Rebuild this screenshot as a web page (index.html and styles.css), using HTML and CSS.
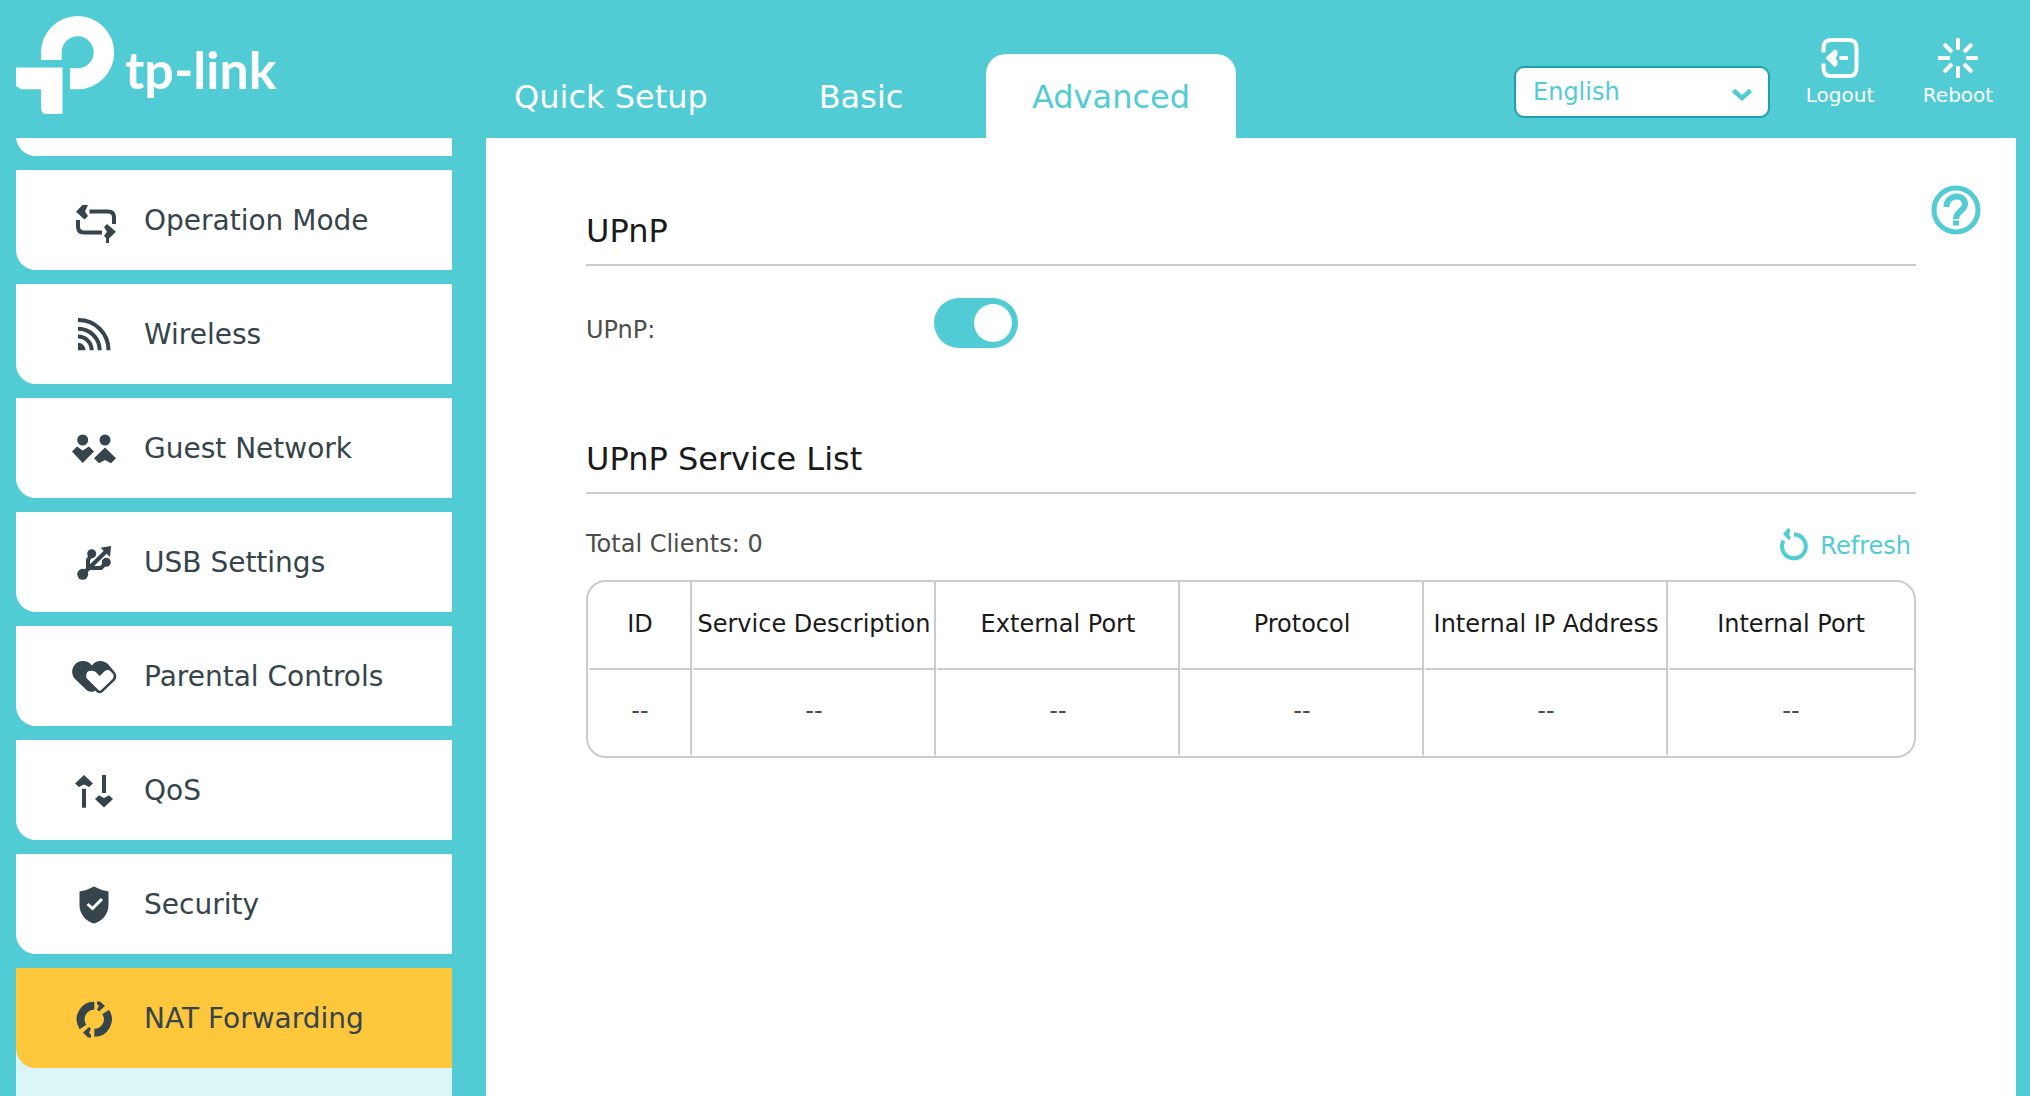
FILE: index.html
```html
<!DOCTYPE html>
<html lang="en">
<head>
<meta charset="utf-8">
<meta name="viewport" content="width=device-width, initial-scale=1">
<title>UPnP - NAT Forwarding</title>
<link rel="stylesheet" href="styles.css">
</head>
<body>
<div class="app">
  <header class="header">
    <a class="logo" href="#" aria-label="tp-link">
      <svg width="290" height="98" viewBox="0 0 290 98" fill="#fff">
        <path d="M25 44V36.600A36.600 36.600 0 1 1 61.700 73.200H54V52.300H61.700A16 16 0 1 0 45.700 36.500V44Z"/>
        <path d="M0 51.500H46.500V98H28L25 94V73.200H5L0 70Z"/>
        <text class="logo-text" x="109" y="73">tp-link</text>
      </svg>
    </a>
    <nav class="tabs" aria-label="Main">
      <a class="tab" href="#">Quick Setup</a>
      <a class="tab" href="#">Basic</a>
      <a class="tab tab-active" href="#" aria-current="page">Advanced</a>
    </nav>
    <div class="tools">
      <div class="language">
        <select class="language-select" aria-label="Language">
          <option>English</option>
        </select>
        <svg class="language-arrow" width="20" height="14" viewBox="0 0 20 14" fill="none" stroke="#51ccd4" stroke-width="4.500"><path d="M1.500 2.500 10 10 18.500 2.500"/></svg>
      </div>
      <button class="tool" type="button">
        <svg width="40" height="42" viewBox="0 0 40 42" fill="none" stroke="#fff" stroke-width="4"><path d="M3.500 14.500V10Q3.500 2 11 2H29Q36.500 2 36.500 10V30Q36.500 38 29 38H11Q3.500 38 3.500 30V25.500"/><path d="M19.500 20H28"/><path d="M5.500 20 14.500 11.500 17.500 13V17L15.500 20 17.500 23V27L14.500 29Z" fill="#fff" stroke="none"/></svg>
        <span>Logout</span>
      </button>
      <button class="tool" type="button">
        <svg width="40" height="42" viewBox="0 0 40 42" fill="none" stroke="#fff" stroke-width="4"><path d="M20 0V12M20 28V40M0 20H12M28 20H40M6 6 14 14M26 26 34 34M34 6 26 14M14 26 6 34"/></svg>
        <span>Reboot</span>
      </button>
    </div>
  </header>

  <div class="body">
    <nav class="sidebar" aria-label="Advanced">
      <ul class="menu">
        <li class="menu-item"></li>
        <li class="menu-item"><a class="menu-link" href="#">
          <svg class="icon" viewBox="0 0 48 48"><path class="line" d="M19.500 14.500H38Q44 14.500 44 20.500V27M8 23V29.500Q8 35.500 14 35.500H32"/><path d="M6 14.700 12.500 8H18L15 14.500 18 19 14.500 22.500ZM46 34.700 37 27 34 30 37 34.700 34 39 36 41V46H39V41.500Z"/></svg>
          Operation Mode</a></li>
        <li class="menu-item"><a class="menu-link" href="#">
          <svg class="icon" viewBox="0 0 48 48"><path class="line" d="M8 9A30 30 0 0 1 38.500 39.300M8 17.800A21.500 21.500 0 0 1 29.700 39.300M8 25.500A13.700 13.700 0 0 1 21.700 39.300"/><path d="M8 31.700A7.600 7.600 0 0 1 15.600 39.300H8Z"/></svg>
          Wireless</a></li>
        <li class="menu-item"><a class="menu-link" href="#">
          <svg class="icon" viewBox="0 0 48 48"><circle cx="12.700" cy="15" r="5.500"/><circle cx="35" cy="15" r="5.500"/><path d="M2 26.500 7 21.500 12.700 25.500 19 21.500 24 26.500 12.700 38ZM35 22.500 46 33.300 41 38.300 35 35 29 38.300 24 33.300Z"/></svg>
          Guest Network</a></li>
        <li class="menu-item"><a class="menu-link" href="#">
          <svg class="icon" viewBox="0 0 48 48"><circle cx="12.700" cy="35.300" r="5.500"/><circle cx="21.700" cy="14.700" r="4.500"/><circle cx="36.300" cy="23.300" r="4.500"/><path class="line" d="M12.700 35.300 36.500 12M18 30V21L21.500 15.500M18.500 29H31L36 24"/><path d="M41 7 30.500 8.700 40 18Z"/></svg>
          USB Settings</a></li>
        <li class="menu-item"><a class="menu-link" href="#">
          <svg class="icon" viewBox="0 0 48 48"><path d="M22 12.500C18 7 9 6.500 5 11.500C1 16 1.500 22 5 26L17 37.500Q20 39.500 24 38.500L40 22L44 18.500L38 11C33 6.500 25 7 22 12.500Z"/><path d="M29.700 21.300 26.500 18Q21 15 16.500 18Q14 21.500 15.500 26L27.500 38Q29.500 40 32 38L44 26.500Q46 23.500 44 20L40.500 16.500Q37 14.500 33.500 17.500Z" fill="#fff" stroke="#36444b" stroke-width="2.500"/></svg>
          Parental Controls</a></li>
        <li class="menu-item"><a class="menu-link" href="#">
          <svg class="icon" viewBox="0 0 48 48"><path class="line" d="M14 21.700V40.700M34 8V26"/><path d="M14 8 23 16.500 19 20 14 17.500 9 20 5 16.500ZM34 40.500 25 32 29 28.300 34 31 39 28.300 43 32Z"/></svg>
          QoS</a></li>
        <li class="menu-item"><a class="menu-link" href="#">
          <svg class="icon" viewBox="0 0 48 48"><path d="M24 5.500Q31 9.500 38.500 10.500V24C38.500 33 32 40.500 24 42.500C16 40.500 9.500 33 9.500 24V10.500Q17 9.500 24 5.500Z"/><path d="M17.500 23 22.500 27.500 32 18" fill="none" stroke="#fff" stroke-width="3"/></svg>
          Security</a></li>
        <li class="menu-item menu-item-open"><a class="menu-link" href="#" aria-current="page">
          <svg class="icon" viewBox="0 0 48 48"><path d="M24.300 10.800A13.500 13.500 0 0 0 13 31.900M35.700 17A13.500 13.500 0 0 1 24.300 37.800" fill="none" stroke="#36444b" stroke-width="8"/><path d="M27 6.500H30L35 11 29 16.500 27 14.500 29 11 27 9ZM21 42.500H18L13 37.500 19 32 21 34 19 37.500 21 40Z"/></svg>
          NAT Forwarding</a></li>
      </ul>
    </nav>

    <main class="content">
      <button class="help" type="button" aria-label="Help">
        <svg width="50" height="50" viewBox="0 0 50 50" fill="none" stroke="#51ccd4" stroke-width="5"><circle cx="25" cy="25" r="22"/><path d="M15.500 22C15.500 8.500 34 8.500 34 19C34 26 25 26 25 34M25 35.500V40.500" stroke-width="6"/></svg>
      </button>

      <section class="section">
        <h2 class="title">UPnP</h2>
        <div class="field">
          <label class="field-label" for="upnp">UPnP:</label>
          <input class="switch" type="checkbox" role="switch" id="upnp" checked>
        </div>
      </section>

      <section class="section">
        <h2 class="title">UPnP Service List</h2>
        <div class="toolbar">
          <p class="total">Total Clients: 0</p>
          <button class="refresh" type="button">
            <svg width="28" height="36" viewBox="0 0 28 36"><path d="M14 6.500A11.900 11.900 0 1 1 3.600 12.500" fill="none" stroke="#51ccd4" stroke-width="4"/><path d="M3 6 8 0 10 1V4L9 6.500 11 10 9 12Z" fill="#51ccd4"/></svg>
            Refresh
          </button>
        </div>
        <table class="table">
          <colgroup><col class="col-id"><col class="col-data" span="4"><col></colgroup>
          <thead>
            <tr><th scope="col">ID</th><th scope="col">Service Description</th><th scope="col">External Port</th><th scope="col">Protocol</th><th scope="col">Internal IP Address</th><th scope="col">Internal Port</th></tr>
          </thead>
          <tbody>
            <tr><td>--</td><td>--</td><td>--</td><td>--</td><td>--</td><td>--</td></tr>
          </tbody>
        </table>
      </section>
    </main>
  </div>
</div>
</body>
</html>
```
FILE: styles.css
```css
:root {
  --teal: #51ccd4;
  --ink: #36444b;
  --line: #ccc;
}

* { box-sizing: border-box; }

body {
  margin: 0;
  background: var(--teal);
  color: #4d4d4d;
  font: 24px/36px Verdana, "DejaVu Sans", sans-serif;
}

button {
  border: 0;
  padding: 0;
  background: none;
  font: inherit;
  cursor: pointer;
}

a { text-decoration: none; }

.app {
  display: flex;
  flex-direction: column;
  height: 100vh;
}

/* Header */
.header {
  display: flex;
  flex: none;
  padding-right: 32px;
}

.logo {
  flex: none;
  width: 486px;
  padding: 16px 16px 24px;
}

.logo svg { display: block; }

.logo-text {
  font: 700 52px Lato, sans-serif;
}

.tabs {
  display: flex;
  align-items: flex-end;
}

.tab {
  width: 250px;
  padding: 23px 0 21px;
  border-radius: 20px 20px 0 0;
  color: #fff;
  font-size: 32px;
  line-height: 40px;
  text-align: center;
  white-space: nowrap;
}

.tab-active {
  background: #fff;
  color: var(--teal);
}

.tools {
  display: flex;
  align-items: flex-start;
  gap: 38px;
  margin-left: auto;
  padding-top: 38px;
}

.language {
  position: relative;
  margin: 28px -8px 0 0;
}

.language-select {
  display: block;
  width: 256px;
  height: 52px;
  padding: 0 48px 0 17px;
  border: 2px solid #1ba1a9;
  border-radius: 10px;
  appearance: none;
  background: #fff;
  color: var(--teal);
  font: inherit;
}

.language-arrow {
  position: absolute;
  top: 22px;
  right: 18px;
  pointer-events: none;
}

.tool {
  display: flex;
  flex-direction: column;
  align-items: center;
  gap: 3px;
  width: 80px;
  color: #fff;
  font-size: 20px;
  line-height: 24px;
}

/* Side menu */
.body {
  display: flex;
  flex: 1;
  gap: 34px;
  min-height: 0;
  padding: 0 14px 0 16px;
}

.sidebar {
  flex: none;
  width: 436px;
  overflow: hidden;
}

.menu {
  display: flex;
  flex-direction: column;
  gap: 14px;
  min-height: 100%;
  margin: -82px 0 0;
  padding: 0;
  list-style: none;
}

.menu-item {
  flex: none;
  min-height: 100px;
  border-bottom-left-radius: 20px;
  background: #fff;
}

.menu-link {
  display: flex;
  align-items: center;
  gap: 26px;
  height: 100px;
  padding: 2px 0 0 54px;
  border-bottom-left-radius: 20px;
  color: var(--ink);
  font-size: 28px;
}

.menu-item-open {
  min-height: 200px;
  border-radius: 0;
  background: #dcf5f6;
}

.menu-item-open .menu-link { background: #ffc73c; }

.icon {
  width: 48px;
  height: 48px;
  fill: var(--ink);
}

.icon .line {
  fill: none;
  stroke: var(--ink);
  stroke-width: 4px;
}

/* Content */
.content {
  position: relative;
  display: flex;
  flex: 1;
  flex-direction: column;
  gap: 91px;
  min-width: 0;
  padding: 73px 100px 0;
  overflow: auto;
  background: #fff;
}

.help {
  position: absolute;
  top: 47px;
  right: 35px;
  height: 50px;
  line-height: 0;
}

.title {
  margin: 0 0 32px;
  padding-bottom: 13px;
  border-bottom: 2px solid var(--line);
  color: #1a1a1a;
  font-size: 32px;
  font-weight: 400;
  line-height: 40px;
}

.field {
  display: flex;
  align-items: flex-end;
}

.field-label { width: 348px; }

.switch {
  width: 84px;
  height: 50px;
  margin: 0;
  padding: 6px;
  border-radius: 25px;
  appearance: none;
  background: var(--line);
}

.switch::before {
  display: block;
  width: 38px;
  height: 38px;
  border-radius: 50%;
  background: #fff;
  content: "";
}

.switch:checked { background: var(--teal); }
.switch:checked::before { margin-left: auto; }

.toolbar {
  display: flex;
  justify-content: space-between;
  margin-bottom: 14px;
}

.total { margin: 0; }

.refresh {
  display: flex;
  align-items: center;
  gap: 12px;
  height: 40px;
  padding-right: 5px;
  color: var(--teal);
}

.table {
  width: 100%;
  border: 2px solid var(--line);
  border-radius: 20px;
  border-spacing: 0;
  table-layout: fixed;
}

.col-id { width: 104px; }
.col-data { width: 244px; }

.table th,
.table td {
  height: 86px;
  padding: 0 0 2px;
  border: solid transparent;
  border-width: 0 2px 2px 2px;
  border-right-color: var(--line);
  font-weight: 400;
  text-align: center;
  white-space: nowrap;
}

.table th {
  height: 88px;
  border-bottom-color: var(--line);
  color: #1a1a1a;
}

.table th:last-child,
.table td:last-child { border-right-color: transparent; }
```
